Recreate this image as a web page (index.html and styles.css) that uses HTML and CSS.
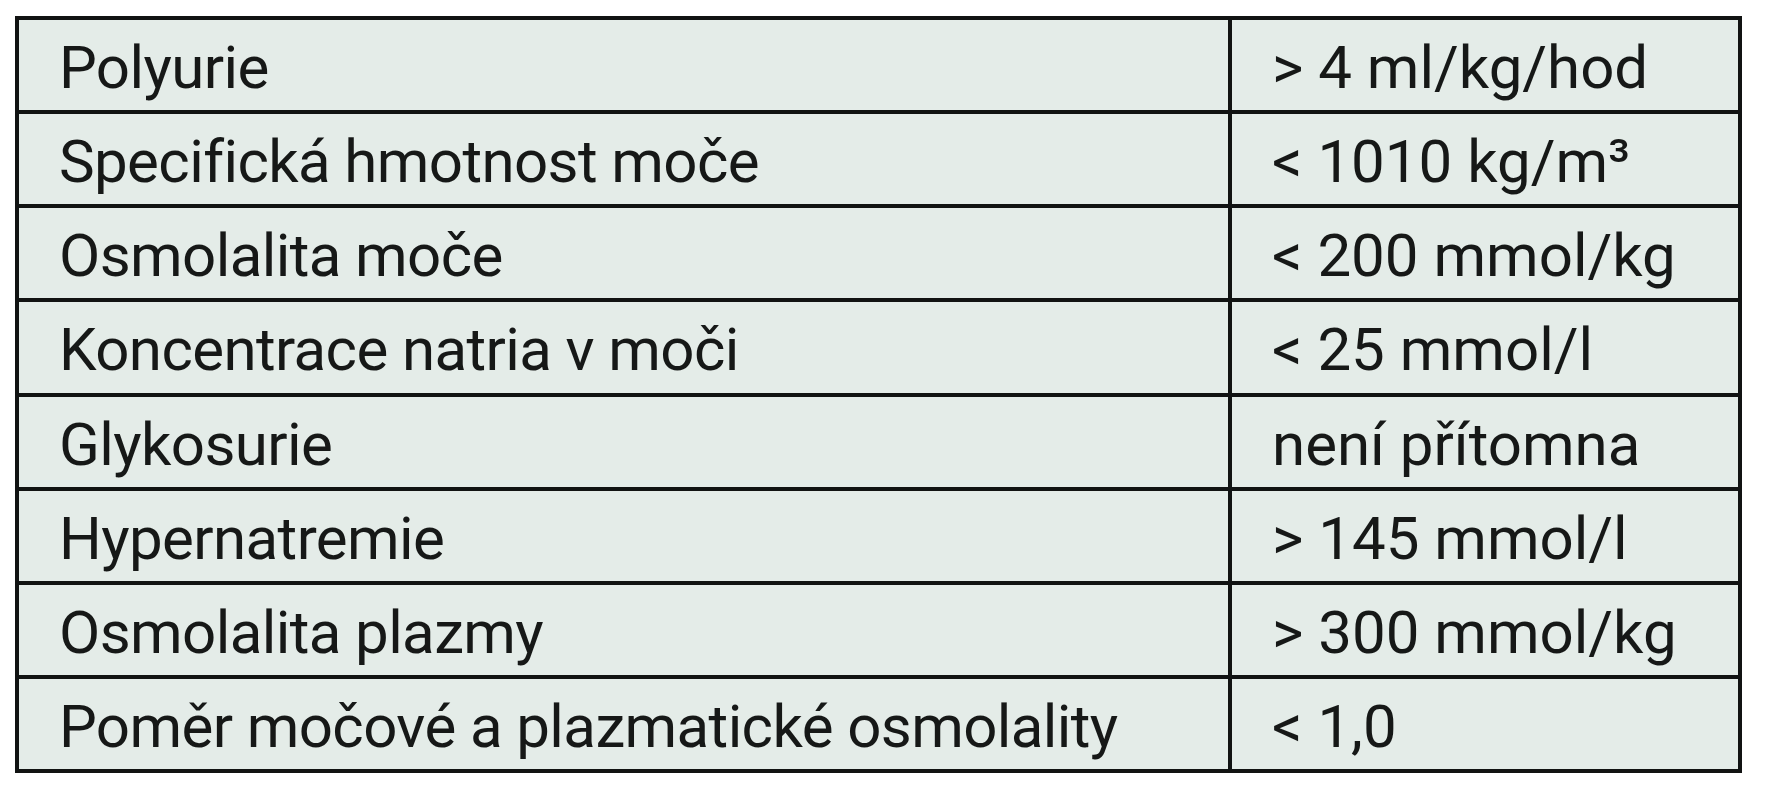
FILE: index.html
```html
<!DOCTYPE html>
<html lang="cs">
<head>
<meta charset="utf-8">
<title>Kritéria</title>
<link rel="stylesheet" href="styles.css">
</head>
<body>
<table class="crit">
  <colgroup><col class="c-name"><col class="c-val"></colgroup>
  <tbody>
    <tr><td class="name">Polyurie</td><td>&gt; 4 ml/kg/hod</td></tr>
    <tr><td class="name">Specifická hmotnost moče</td><td>&lt; 1010 kg/m³</td></tr>
    <tr><td class="name">Osmolalita moče</td><td>&lt; 200 mmol/kg</td></tr>
    <tr><td class="name">Koncentrace natria v moči</td><td>&lt; 25 mmol/l</td></tr>
    <tr><td class="name">Glykosurie</td><td>není přítomna</td></tr>
    <tr><td class="name">Hypernatremie</td><td>&gt; 145 mmol/l</td></tr>
    <tr><td class="name">Osmolalita plazmy</td><td>&gt; 300 mmol/kg</td></tr>
    <tr><td class="name">Poměr močové a plazmatické osmolality</td><td>&lt; 1,0</td></tr>
  </tbody>
</table>
</body>
</html>
```

FILE: styles.css
```css
html, body {
  margin: 0;
  background: #ffffff;
}
body {
  padding: 16px 0 0 15px;
  font-family: Roboto, "Liberation Sans", Arial, sans-serif;
  color: #161817;
}
.crit {
  border-collapse: collapse;
  width: 1727px;
  height: 757px;
  background: #e4ece8;
  border: 4px solid #111312;
  table-layout: fixed;
}
.c-name { width: 1213px; }
.crit td {
  border: 4px solid #111312;
  padding: 6px 0 0 40px;
  font-size: 60px;
  line-height: 1;
  vertical-align: middle;
  white-space: nowrap;
}
.crit td.name {
  letter-spacing: -0.6px;
}
```
